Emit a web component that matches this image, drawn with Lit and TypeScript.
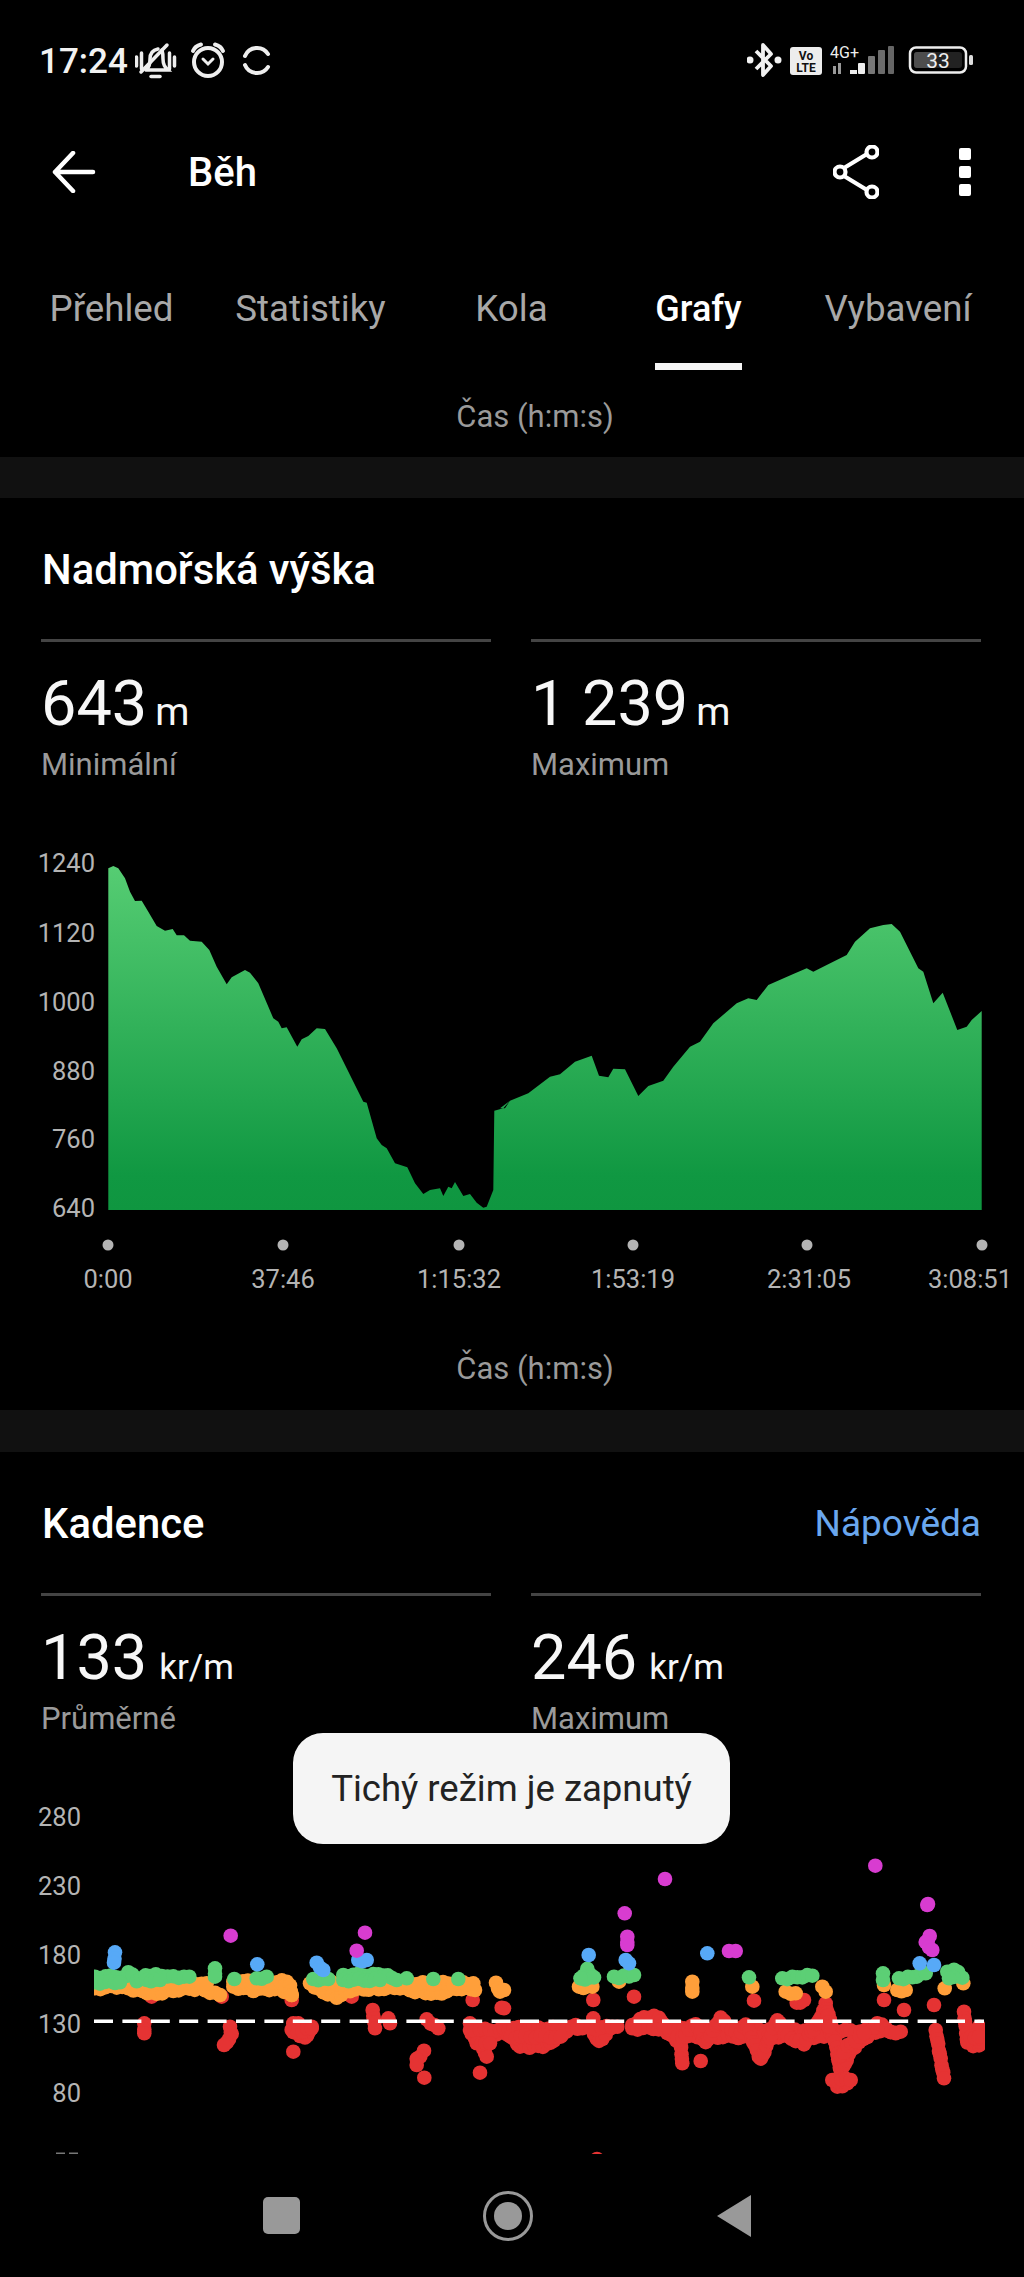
import { LitElement, html, css, svg } from "lit";
import { customElement } from "lit/decorators.js";

type P = [number, number];
const lx = (x: number) => x / 3;
const rx = (x: number) => 504 + x / 3;
const zy = (y: number) => 1780 + y / 3;

/* elevation profile, in 3x crop coordinates */
const LEFT: P[] = [[325,115],[340,108],[355,115],[375,145],[390,185],[405,213],[425,212],[445,245],[470,288],[495,302],[518,297],[530,316],[552,316],[570,332],[605,335],[628,360],[650,410],[680,463],[695,442],[735,420],[750,428],[775,460],[820,565],[835,575],[845,595],[860,592],[892,650],[905,628],[925,618],[950,595],[975,597],[1010,655],[1050,735],[1090,815],[1100,818],[1130,925],[1145,945],[1160,955],[1185,1000],[1222,1012],[1245,1060],[1270,1092],[1290,1080],[1320,1075],[1330,1098],[1345,1070],[1355,1075],[1365,1056],[1390,1098],[1410,1092],[1430,1118],[1450,1133],[1460,1130],[1480,1080],[1483,842],[1510,835],[1530,812]];
const RIGHT: P[] = [[0,835],[15,835],[30,812],[85,790],[150,740],[180,733],[225,695],[275,677],[297,737],[325,742],[340,716],[375,718],[415,798],[445,768],[490,752],[520,710],[570,650],[600,635],[640,580],[710,520],[745,505],[770,510],[805,465],[880,432],[920,415],[940,425],[980,405],[1040,375],[1065,335],[1110,295],[1150,285],[1175,282],[1200,305],[1255,415],[1270,425],[1300,520],[1328,488],[1372,600],[1400,590],[1415,570],[1445,543],[1445,1140]];
const profile = [
  ...LEFT.map(([x, y]) => `${(x / 3).toFixed(1)},${(830 + y / 3).toFixed(1)}`),
  ...RIGHT.map(([x, y]) => `${(500 + x / 3).toFixed(1)},${(830 + y / 3).toFixed(1)}`),
  "108.3,1210",
].join(" ");

function chain(pts: P[], map: (x: number) => number): P[] {
  const out: P[] = [];
  pts.forEach((p, i) => {
    if (i === pts.length - 1) { out.push([map(p[0]), zy(p[1])]); return; }
    const q = pts[i + 1];
    const n = Math.max(1, Math.round(Math.hypot(q[0] - p[0], q[1] - p[1]) / 15));
    for (let k = 0; k < n; k++) {
      const t = k / n;
      const j = Math.sin((out.length + i) * 1.7) * 1.3;
      out.push([map(p[0] + (q[0] - p[0]) * t), zy(p[1] + (q[1] - p[1]) * t) + j]);
    }
  });
  return out;
}
const L = (...c: P[][]) => c.flatMap((s) => chain(s, lx));
const R = (...c: P[][]) => c.flatMap((s) => chain(s, rx));

const RED: P[] = [
  ...L([[455,650]],[[665,650]],[[875,660]],[[1055,650]],[[1418,660]],[[1505,683]],
    [[433,730],[433,760]],[[690,740],[695,765],[672,795]],[[880,730],[875,750],[900,765],[915,775],[935,740]],[[895,730],[880,760],[935,745]],
    [[880,815]],[[1118,690],[1125,745]],[[1165,715],[1170,730]],[[1280,718],[1315,745]],[[1272,812],[1250,840],[1250,855]],[[1273,893]],
    [[1410,730],[1415,765],[1445,790],[1460,830]],[[1445,790],[1490,760],[1520,750],[1560,800]],[[1410,750],[1560,750]],[[1430,790],[1470,790]],[[1440,878]]),
  ...R([[268,660]],[[390,650]],[[750,662]],[[878,668],[900,660]],[[1140,660]],[[1200,690]],[[1290,675]],[[590,843]],[[0,685]],
    [[0,750],[50,800],[90,800],[130,795],[160,770],[215,735]],[[0,745],[235,745]],[[20,770],[170,770]],
    [[268,715],[270,760],[285,785],[325,740]],[[260,745],[340,740]],
    [[385,735],[420,710],[465,710],[490,760],[530,790],[535,850]],[[385,745],[480,745],[1190,755]],[[520,770],[960,770]],
    [[535,770],[575,730],[605,790],[650,715],[705,770],[725,730],[770,840],[820,720],[850,770],[900,790],[945,720],[965,680],[990,760],[1010,880],[1040,810],[1090,770],[1120,730],[1175,760]],
    [[975,745],[1010,830],[1030,800],[1080,760]],[[1000,920],[1030,910]],[[985,900],[1040,900]],[[965,670],[975,740]],
    [[1295,750],[1305,810],[1320,895]],[[1380,695],[1390,790],[1425,800],[1425,740]],[[1400,770],[1425,770]]),
  [597, 2159],
];
const ORANGE: P[] = [
  ...L([[285,625],[350,620],[400,630],[470,640],[520,630],[600,625],[660,645]],[[300,605],[620,610]],
    [[700,620],[760,630],[840,625],[875,645]],[[700,605],[860,605]],[[840,605],[870,620],[875,645]],
    [[930,610],[970,635],[1010,650],[1050,630],[1120,625],[1200,625],[1260,635],[1310,640],[1400,620],[1425,630]],[[950,610],[1420,610]],
    [[1488,608],[1500,635]]),
  ...R([[0,630]],[[225,620],[265,620]],[[345,605]],[[565,605],[565,635]],[[745,620]],[[845,635],[875,640]],[[955,620],[965,635]],[[1140,615]],[[1180,630],[1205,630]],[[1322,625]],[[1378,610]]),
];
const GREEN: P[] = [
  ...L([[285,590],[380,590],[385,575],[410,600],[450,585],[485,585],[520,590],[568,590]],[[285,607],[360,607]],[[440,600],[480,600]],[[645,565],[645,590]],[[703,597]],[[770,595],[800,590]],
    [[940,597],[985,597]],[[1030,585],[1150,585],[1190,600]],[[1030,600],[1140,600]],[[1220,595]],[[1300,597]],[[1375,597]]),
  ...R([[230,595],[250,570],[270,595],[230,595]],[[330,590],[360,590],[390,585]],[[735,592]],[[835,595],[880,590],[925,587]],[[1137,580],[1137,600]],[[1185,595],[1225,590],[1265,580]],[[1330,575],[1350,570],[1375,590],[1335,595]]),
];
const BLUE: P[] = [
  ...L([[345,517],[342,548]],[[772,553]],[[950,548],[970,570]],[[1075,540],[1100,540]]),
  ...R([[254,525]],[[365,540],[375,550]],[[610,520]],[[1247,550]],[[1290,555]]),
];
const MAGENTA: P[] = [
  ...L([[692,467]],[[1095,458]],[[1070,512]]),
  ...R([[362,400]],[[370,470],[370,495]],[[483,297]],[[675,513],[695,513]],[[1114,257]],[[1270,375],[1272,372]],[[1277,468],[1265,490],[1285,510]]),
];
const SERIES: [P[], string][] = [[RED, "#e53333"], [ORANGE, "#ff9f3a"], [GREEN, "#5ccf75"], [BLUE, "#57a9f7"], [MAGENTA, "#d83cd0"]];

const ELE_Y: [string, number][] = [["1240", 872], ["1120", 942], ["1000", 1011], ["880", 1080], ["760", 1148], ["640", 1217]];
const TICKS: [number, number, string][] = [[108, 108, "0:00"], [283, 283, "37:46"], [459, 459, "1:15:32"], [633, 633, "1:53:19"], [807, 809, "2:31:05"], [982, 970, "3:08:51"]];
const CAD_Y: [string, number][] = [["280", 1826], ["230", 1895], ["180", 1964], ["130", 2033], ["80", 2102]];

@customElement("app-root")
export class AppRoot extends LitElement {
  static styles = css`
    :host { display: block; position: relative; width: 1024px; height: 2277px; overflow: hidden; background: #000; color: #fff; font-family: Roboto, "Noto Sans", sans-serif; }
    .main { height: 2154px; overflow: hidden; }
    .status { height: 122px; display: flex; align-items: center; justify-content: space-between; padding: 0 51px 0 39px; }
    .status-left { display: flex; align-items: center; }
    .time { width: 96px; font-size: 35px; font-weight: 500; color: #f2f2f2; }
    svg { display: block; }
    .appbar { height: 100px; display: flex; align-items: center; padding: 0 53px 0 52px; }
    .title { margin-left: 92px; font-size: 40px; font-weight: 500; flex: 1; }
    .more { display: flex; flex-direction: column; gap: 6px; margin-left: 80px; }
    .more i { display: block; width: 12px; height: 12px; border-radius: 2px; background: #fff; }
    .tabs { display: grid; grid-template-columns: 223px 175px 227px 147px 252px; height: 148px; }
    .tab { justify-self: center; height: 148px; box-sizing: border-box; padding-top: 65px; font-size: 36.700px; line-height: 44px; color: #a8a8a8; }
    .tab.on { color: #fff; font-size: 36px; font-weight: 500; border-bottom: 7px solid #f5f5f5; }
    .axis { text-align: center; padding-left: 46px; font-size: 31px; line-height: 36px; color: #9a9a9a; }
    .axis.top { padding-top: 29px; padding-bottom: 22px; }
    .axis.bottom { padding-bottom: 23px; }
    .band { height: 41px; background: #111; }
    .band.b2 { height: 42px; }
    .head { height: 141px; box-sizing: border-box; padding: 48px 43px 0 42px; display: flex; justify-content: space-between; line-height: 48px; }
    .head h2 { margin: 0; font-size: 41.800px; font-weight: 500; }
    .help { font-size: 37px; color: #6aa7ee; }
    .stats { display: grid; grid-template-columns: 450px 450px; gap: 40px; padding-left: 41px; }
    .stat { border-top: 3px solid #444; padding-top: 24px; }
    .val { font-size: 63px; line-height: 76px; color: #f7f7f7; }
    .unit { font-size: 35px; line-height: 1; margin-left: 12px; }
    .unit.m { font-size: 39px; margin-left: 8px; }
    .lab { margin-top: 6px; font-size: 31px; line-height: 34px; color: #9a9a9a; }
    .tk { font-size: 25.500px; fill: #b4b4b4; font-family: Roboto, "Noto Sans", sans-serif; }
    .st { font-family: Roboto, "Noto Sans", sans-serif; fill: #eee; }
    .nav { height: 123px; display: flex; align-items: center; padding-left: 263px; }
    .sq { width: 37px; height: 37px; border-radius: 5px; background: #999; }
    .circ { margin-left: 183px; }
    .tri { margin-left: 184px; }
    .toast { position: absolute; left: 293px; top: 1733px; width: 437px; height: 111px; border-radius: 30px; background: #f5f5f5; color: #222; display: flex; align-items: center; justify-content: center; font-size: 36.500px; }
  `;

  private statusLeft() {
    return html`<svg width="137" height="40" viewBox="135 41 137 40" fill="none" stroke="#eee" stroke-width="3.5" stroke-linecap="round">
      <path d="M136.500 57v9M141.500 53v16M174.500 57v9M169.500 53v16" />
      <path d="M146 70c3-3 4-5 4-11c0-6 3-9 8-10M162 50c1 3 1 5 1 9c0 6 2 8 5 11H146" />
      <path d="M151 76.500h9" />
      <path d="M167 45L141 72" />
      <circle cx="208" cy="62" r="14" stroke-width="4" />
      <path d="M193 51Q195 46 201 44.500M223 51Q221 46 215 44.500" stroke-width="4" />
      <path d="M203 59l5 5l5-5" stroke-width="3" />
      <path d="M268 54A13 13 0 0 0 245 56M245 65A13 13 0 0 0 268 67" stroke-width="4" />
    </svg>`;
  }

  private statusRight() {
    return html`<svg width="226" height="40" viewBox="747 41 226 40">
      <path d="M756 51L771 66L763 75V45L771 54L756 69" fill="none" stroke="#f2f2f2" stroke-width="3.800" stroke-linejoin="round" />
      <circle cx="750" cy="60" r="3.500" fill="#f2f2f2" /><circle cx="778" cy="60" r="3.500" fill="#f2f2f2" />
      <rect x="790" y="47" width="32" height="28" rx="3" fill="#ededed" />
      <text x="806" y="60" text-anchor="middle" font-size="12" font-weight="700" class="st" style="fill:#111">Vo</text>
      <text x="806" y="72" text-anchor="middle" font-size="12" font-weight="700" class="st" style="fill:#111">LTE</text>
      <text x="830" y="58" font-size="16" class="st">4G+</text>
      <path d="M833 66v8h3v-8zM838 63v11h3v-11z" fill="#999" />
      <rect x="850" y="70" width="7" height="4" fill="#eee" /><rect x="858" y="63" width="7" height="11" rx="1" fill="#eee" />
      <rect x="868" y="56" width="7" height="18" rx="1" fill="#777" /><rect x="878" y="50" width="7" height="24" rx="1" fill="#6c6c6c" /><rect x="888" y="46" width="6" height="28" rx="1" fill="#666" />
      <rect x="910" y="47.500" width="56" height="25" rx="6" fill="none" stroke="#eee" stroke-width="2.500" />
      <rect x="914" y="52" width="48" height="16" rx="3" fill="#222" /><rect x="914" y="52" width="22" height="16" rx="3" fill="#4d4d4d" />
      <text x="938" y="68" text-anchor="middle" font-size="21" class="st">33</text>
      <rect x="969" y="55" width="4" height="10" rx="1.500" fill="#ddd" />
    </svg>`;
  }

  private stat(v: string, u: string, l: string) {
    return html`<div class="stat"><div class="val">${v}<span class="unit ${u === "m" ? "m" : ""}">${u}</span></div><div class="lab">${l}</div></div>`;
  }

  private elevationChart() {
    return html`<svg width="1024" height="569" viewBox="0 782 1024 569">
      <defs><linearGradient id="ele" x1="0" y1="865" x2="0" y2="1210" gradientUnits="userSpaceOnUse">
        <stop offset="0" stop-color="#56cd73" /><stop offset="0.9" stop-color="#109842" /><stop offset="1" stop-color="#0f9640" />
      </linearGradient></defs>
      ${ELE_Y.map(([t, y]) => svg`<text class="tk" x="95" y=${y} text-anchor="end">${t}</text>`)}
      <polygon points=${profile} fill="url(#ele)" />
      ${TICKS.map(([d, c, t]) => svg`<circle cx=${d} cy="1245" r="5.500" fill="#b4b4b4" /><text class="tk" x=${c} y="1288" text-anchor="middle">${t}</text>`)}
    </svg>`;
  }

  private cadenceChart() {
    const dash = [];
    for (let x = 94; x < 984; x += 28.4) dash.push(svg`<rect x=${x} y="2019.500" width=${Math.min(19, 984 - x)} height="3.500" fill="#fff" />`);
    return html`<svg width="1024" height="418" viewBox="0 1736 1024 418">
      <defs><clipPath id="cad"><rect x="94" y="1736" width="891" height="418" /></clipPath></defs>
      ${CAD_Y.map(([t, y]) => svg`<text class="tk" x="81" y=${y} text-anchor="end">${t}</text>`)}
      <rect x="56" y="2152.500" width="9" height="1.500" fill="#777" /><rect x="69" y="2152.500" width="9" height="1.500" fill="#777" />
      <g clip-path="url(#cad)">
        ${SERIES.map(([pts, c]) => svg`<g fill=${c}>${pts.map(([x, y]) => svg`<circle cx=${x.toFixed(1)} cy=${y.toFixed(1)} r="7.300" />`)}</g>`)}
      </g>
      ${dash}
    </svg>`;
  }

  render() {
    return html`
      <div class="main">
        <div class="status">
          <div class="status-left"><span class="time">17:24</span>${this.statusLeft()}</div>
          ${this.statusRight()}
        </div>
        <div class="appbar">
          <svg width="44" height="42" viewBox="0 0 44 42" fill="none" stroke="#fff" stroke-width="4.500" stroke-linecap="round" stroke-linejoin="round"><path d="M41 21H3M21 2L3 21L21 40" /></svg>
          <span class="title">Běh</span>
          <svg width="46" height="54" viewBox="0 0 46 54" fill="none" stroke="#fff" stroke-width="4.200"><path d="M11 23L34 9M11 31L34 45" /><circle cx="39" cy="7" r="5.500" /><circle cx="7" cy="27" r="5.500" /><circle cx="39" cy="47" r="5.500" /></svg>
          <div class="more"><i></i><i></i><i></i></div>
        </div>
        <div class="tabs">
          <div class="tab">Přehled</div><div class="tab">Statistiky</div><div class="tab">Kola</div><div class="tab on">Grafy</div><div class="tab">Vybavení</div>
        </div>
        <div class="axis top">Čas (h:m:s)</div>
        <div class="band"></div>
        <div class="head"><h2>Nadmořská výška</h2></div>
        <div class="stats">${this.stat("643", "m", "Minimální")}${this.stat("1 239", "m", "Maximum")}</div>
        ${this.elevationChart()}
        <div class="axis bottom">Čas (h:m:s)</div>
        <div class="band b2"></div>
        <div class="head"><h2>Kadence</h2><span class="help">Nápověda</span></div>
        <div class="stats">${this.stat("133", "kr/m", "Průměrné")}${this.stat("246", "kr/m", "Maximum")}</div>
        ${this.cadenceChart()}
      </div>
      <div class="nav">
        <div class="sq"></div>
        <svg class="circ" width="50" height="50" viewBox="0 0 50 50"><circle cx="25" cy="25" r="23.500" fill="none" stroke="#999" stroke-width="3" /><circle cx="25" cy="25" r="14" fill="#999" /></svg>
        <svg class="tri" width="34" height="42" viewBox="0 0 34 42"><path d="M34 0V42L0 21Z" fill="#999" /></svg>
      </div>
      <div class="toast">Tichý režim je zapnutý</div>
    `;
  }
}
